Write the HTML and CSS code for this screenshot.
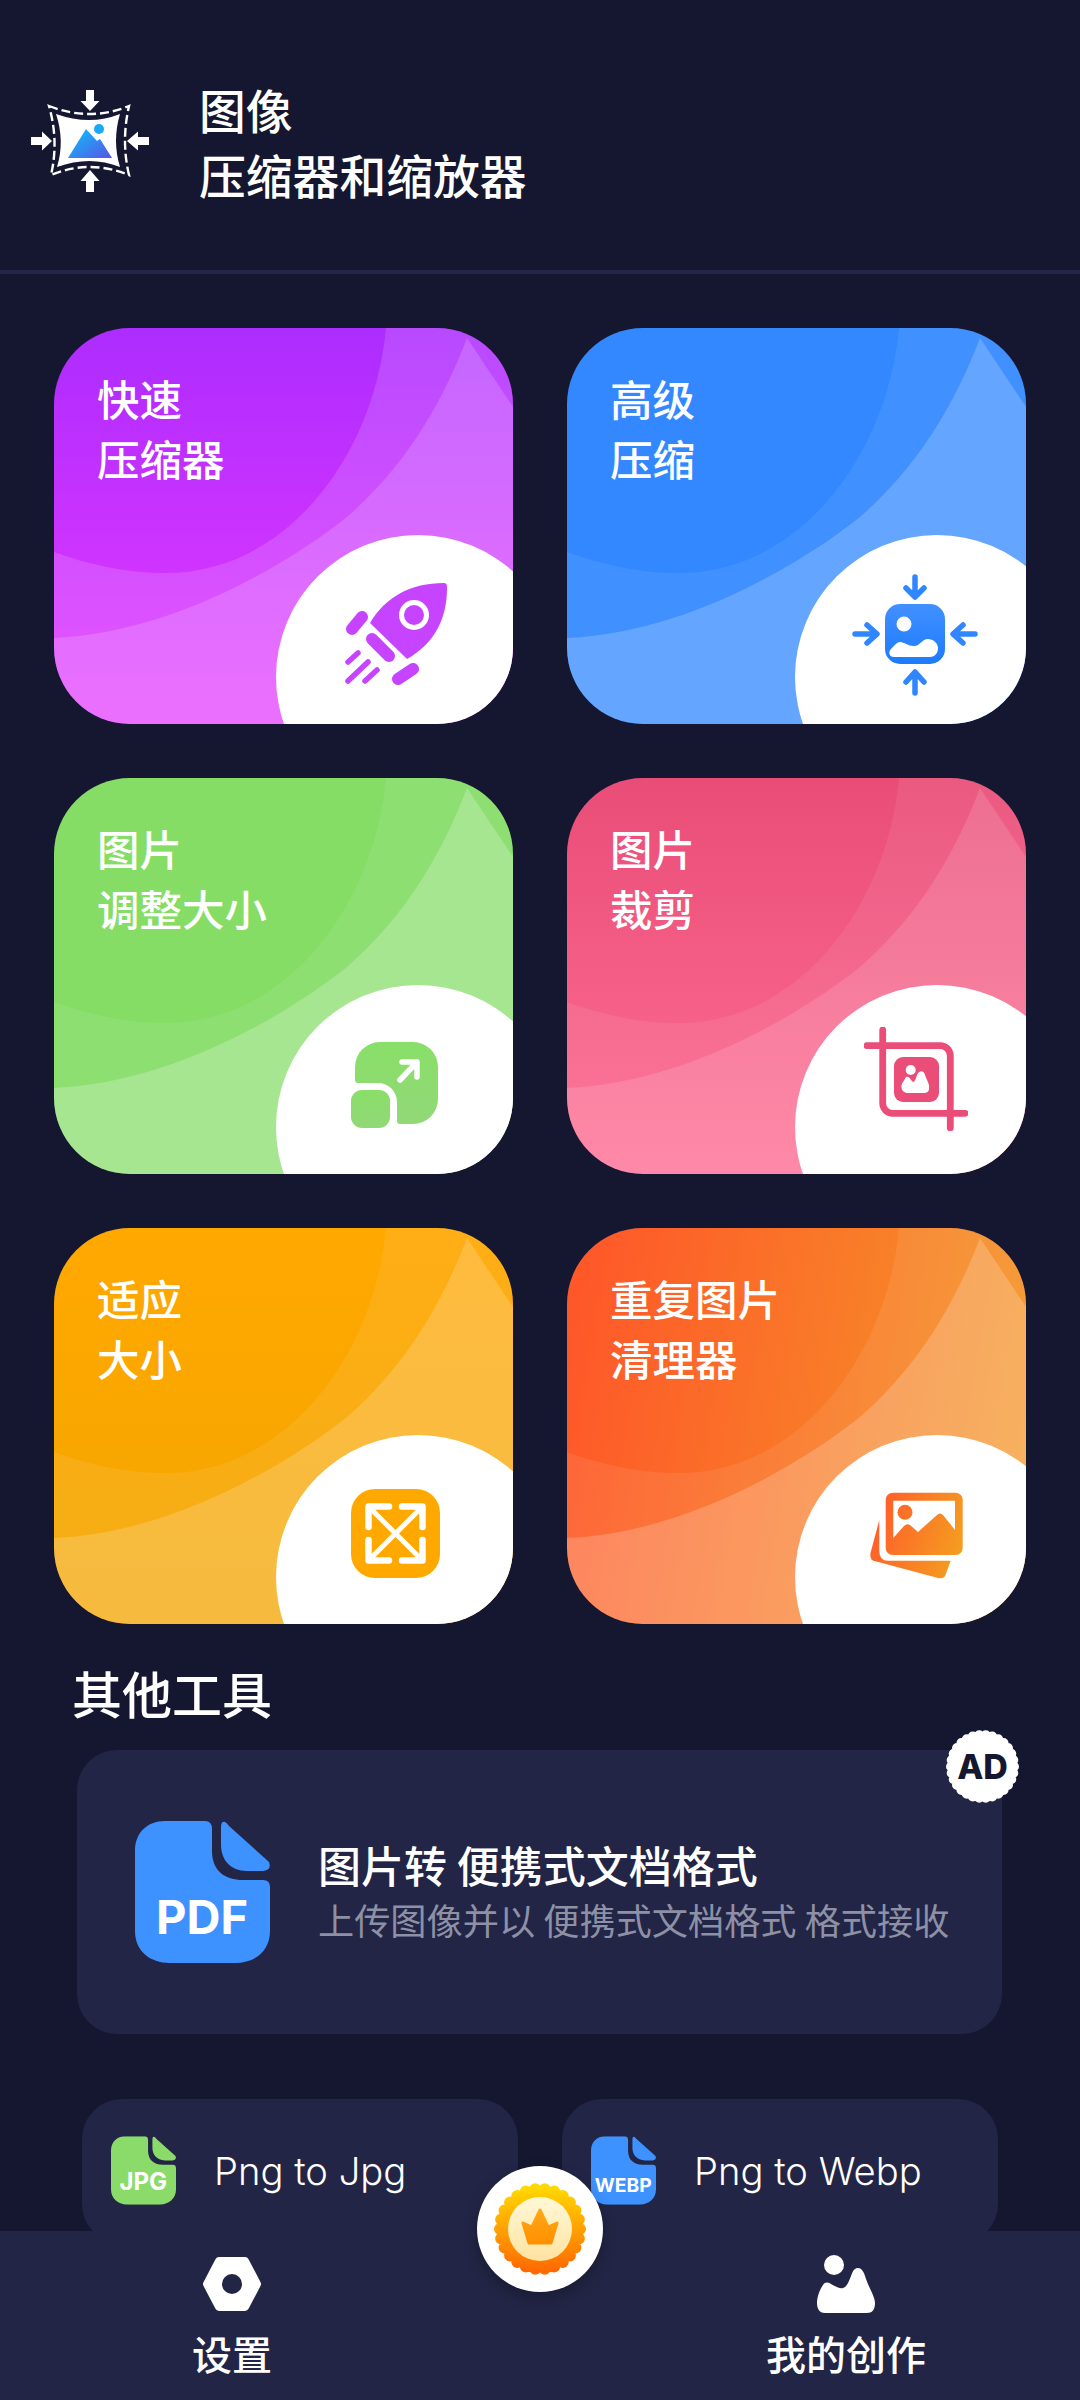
FILE: index.html
```html
<!DOCTYPE html>
<html lang="zh-CN">
<head>
<meta charset="utf-8">
<title>图像压缩器和缩放器</title>
<link rel="stylesheet" href="styles.css">
</head>
<body>
<svg class="defs" width="0" height="0" aria-hidden="true">
  <defs>
    <symbol id="waves" viewBox="0 0 459 396" preserveAspectRatio="none">
      <path class="wave-mid" d="M332 0C320 130 230 247 109 245C70 245 30 235 0 224V396H459V0Z"/>
      <path class="wave-light" d="M413 10C390 70 355 135 293 189C235 235 120 305 0 310V396H459V79Z"/>
    </symbol>
    <symbol id="doc" viewBox="0 0 135 142">
      <path d="M30 0H70Q77 0 77 8V30C77 50 90 59 108 59H128Q135 59 135 66V110C135 130 120 142 100 142H35C15 142 0 130 0 110V30C0 12 12 0 30 0Z"/>
      <path d="M86 6Q86 0 90 1Q92 2 94 5L134 41Q137 49 128 50H112C95 50 86 38 86 24Z"/>
    </symbol>
    <linearGradient id="g-logo" x1="0" y1="0" x2="1" y2="1"><stop offset="0" stop-color="#08c4ff"/><stop offset="1" stop-color="#5a54e4"/></linearGradient>
    <linearGradient id="g-blue" x1="0" y1="0" x2="0" y2="1"><stop offset="0" stop-color="#4290ff"/><stop offset="1" stop-color="#1c7bff"/></linearGradient>
    <linearGradient id="g-green" x1="0" y1="0" x2="0" y2="1"><stop offset="0" stop-color="#88df68"/><stop offset="1" stop-color="#92d878"/></linearGradient>
    <linearGradient id="g-photo" gradientUnits="userSpaceOnUse" x1="0" y1="30" x2="96" y2="60"><stop offset="0" stop-color="#ff5c2a"/><stop offset="1" stop-color="#f4a020"/></linearGradient>
    <linearGradient id="g-medal" x1="0" y1="0" x2="0" y2="1"><stop offset="0" stop-color="#ffd800"/><stop offset="1" stop-color="#ff6a00"/></linearGradient>
    <linearGradient id="g-medal-in" x1="0" y1="0" x2="0" y2="1"><stop offset="0" stop-color="#fff8d8"/><stop offset="1" stop-color="#ffe3a0"/></linearGradient>
    <linearGradient id="g-crown" x1="0" y1="0" x2="0" y2="1"><stop offset="0" stop-color="#ffa818"/><stop offset="1" stop-color="#ff9000"/></linearGradient>
  </defs>
</svg>

<header class="app-header">
  <svg class="logo" viewBox="0 0 120 104">
    <g class="logo-arrows">
      <path d="M56 1H64V12H69.5L60 22L50.5 12H56Z"/>
      <path d="M56 103H64V92H69.5L60 81L50.5 92H56Z"/>
      <path d="M1 48V56H12V61.5L22 52L12 42.5V48Z"/>
      <path d="M119 48V56H108V61.5L97 52L108 42.5V48Z"/>
    </g>
    <path class="logo-dash" d="M19 17Q60 33 99 17Q91 52 99 86Q60 70 21 86Q29 52 19 17Z"/>
    <path class="logo-face" d="M26 25Q60 37 90 25Q82 52 90 78Q60 66 27 78Q35 52 26 25Z"/>
    <path fill="url(#g-logo)" d="M38 69L56 40L67 52L70 50L82 69Z"/>
    <circle cx="69" cy="40" r="5" fill="#18a8f8"/>
  </svg>
  <h1 class="app-title">图像<br>压缩器和缩放器</h1>
</header>

<main class="tools">
  <a class="tool tool-purple">
    <svg class="waves"><use href="#waves"/></svg>
    <div class="tool-name">快速<br>压缩器</div>
    <div class="blob">
      <svg class="icon icon-rocket" viewBox="0 0 102 102">
        <path d="M99 0C102 0 102 3 102 5C102 35 90 60 62 76L25 40C40 14 66 0 99 0Z"/>
        <circle cx="69" cy="32" r="15" fill="#fff"/>
        <circle cx="69" cy="32" r="10"/>
        <g class="rocket-lines">
          <path class="thick" d="M7 46L17 34"/>
          <path class="thick" d="M53 96L68 86"/>
          <path class="thick" d="M27 56L44 73"/>
          <path d="M3 79L13 70"/>
          <path d="M3 98L23 79"/>
          <path d="M20 98L32 87"/>
        </g>
      </svg>
    </div>
  </a>

  <a class="tool tool-blue">
    <svg class="waves"><use href="#waves"/></svg>
    <div class="tool-name">高级<br>压缩</div>
    <div class="blob">
      <svg class="icon icon-compress" viewBox="0 0 126 122">
        <rect x="33" y="30" width="60" height="60" rx="15" fill="url(#g-blue)"/>
        <circle cx="52" cy="50" r="7.5" fill="#fff"/>
        <path fill="#fff" d="M42 83C37 83 36 78 39 75C43 71 45 68 48 68C52 68 56 72 62 72C68 72 70 65 76 65C81 65 86 69 86 74C86 80 82 83 78 83Z"/>
        <g class="compress-arrows">
          <path d="M63 3V22M54 14L63 23L72 14"/>
          <path d="M63 119V100M54 108L63 98L72 108"/>
          <path d="M3 60H24M15 51L25 60L15 69"/>
          <path d="M123 60H102M111 51L101 60L111 69"/>
        </g>
      </svg>
    </div>
  </a>

  <a class="tool tool-green">
    <svg class="waves"><use href="#waves"/></svg>
    <div class="tool-name">图片<br>调整大小</div>
    <div class="blob">
      <svg class="icon icon-resize" viewBox="0 0 88 87">
        <path fill="url(#g-green)" d="M4 25A25 25 0 0 1 29 0H62A25 25 0 0 1 87 25V57A25 25 0 0 1 62 82H49A3 3 0 0 1 46 79V60A19 19 0 0 0 27 41H7A3 3 0 0 1 4 38Z"/>
        <rect y="48" width="39" height="38" rx="11" fill="url(#g-green)"/>
        <path class="resize-arrow" d="M49 38L66 20M51 20H66V35"/>
      </svg>
    </div>
  </a>

  <a class="tool tool-pink">
    <svg class="waves"><use href="#waves"/></svg>
    <div class="tool-name">图片<br>裁剪</div>
    <div class="blob">
      <svg class="icon icon-crop" viewBox="0 0 104 104">
        <path class="crop-lines" d="M18.7 3V76A10 10 0 0 0 28.7 86.3H101M3 18.7H76A10 10 0 0 1 86.3 28.7V101"/>
        <rect x="30" y="30" width="45" height="45" rx="9"/>
        <circle cx="46.7" cy="43" r="5" fill="#fff"/>
        <path fill="#fff" d="M44 66C37 66 36 59 39 55L42 50C44 49 46 51 47 53L49 55C51 55 52 51 53 48C55 43 60 43 61 48C63 54 66 57 65 62C65 65 62 66 60 66Z"/>
      </svg>
    </div>
  </a>

  <a class="tool tool-amber">
    <svg class="waves"><use href="#waves"/></svg>
    <div class="tool-name">适应<br>大小</div>
    <div class="blob">
      <svg class="icon icon-expand" viewBox="0 0 89 89">
        <rect width="89" height="89" rx="24"/>
        <g class="expand-lines">
          <path class="bold" d="M17.5 38V17.5H38M71.5 38V17.5H51M17.5 51V71.5H38M71.5 51V71.5H51"/>
          <path d="M21 21L68 68M68 21L21 68"/>
        </g>
      </svg>
    </div>
  </a>

  <a class="tool tool-orange">
    <svg class="waves"><use href="#waves"/></svg>
    <div class="tool-name">重复图片<br>清理器</div>
    <div class="blob">
      <svg class="icon icon-photos" viewBox="0 0 96 90">
        <path fill="url(#g-photo)" d="M9.3 30L.5 63Q-.5 70 4.5 71L68 88Q74 89 75.5 85L80.7 70.7H18Q9 70.7 9.3 60Z"/>
        <rect x="15.7" y="2.7" width="77" height="62.3" rx="7" fill="url(#g-photo)"/>
        <path fill="#fff" d="M23.3 48V10.7H85V40L73 25Q70 22 67 25L48 42L40 35Q37 33 34 36Z"/>
        <circle cx="35" cy="22.3" r="7.5" fill="url(#g-photo)"/>
      </svg>
    </div>
  </a>
</main>

<section class="other">
  <h2 class="other-title">其他工具</h2>
  <div class="promo">
    <svg class="doc-icon doc-pdf" viewBox="0 0 135 142">
      <use href="#doc"/>
      <text class="doc-label" x="67" y="113">PDF</text>
    </svg>
    <div class="promo-text">
      <div class="promo-name">图片转 便携式文档格式</div>
      <div class="promo-desc">上传图像并以 便携式文档格式 格式接收</div>
    </div>
    <div class="ad-badge">
      <svg viewBox="0 0 72 72">
        <circle class="ad-edge" cx="36" cy="36" r="31" pathLength="30"/>
      </svg>
      <span>AD</span>
    </div>
  </div>
  <div class="convert-row">
    <div class="convert">
      <svg class="doc-icon-sm doc-green" viewBox="0 0 135 142">
        <use href="#doc"/>
        <text class="doc-label-sm" x="67" y="112">JPG</text>
      </svg>
      <span class="convert-name">Png to Jpg</span>
    </div>
    <div class="convert">
      <svg class="doc-icon-sm doc-pdf" viewBox="0 0 135 142">
        <use href="#doc"/>
        <text class="doc-label-sm webp" x="67" y="116">WEBP</text>
      </svg>
      <span class="convert-name">Png to Webp</span>
    </div>
  </div>
</section>

<nav class="bottom-nav">
  <div class="nav-item">
    <svg class="nav-icon" viewBox="0 0 58 54">
      <path class="hex" d="M4 27L16 4H42L54 27L42 50H16Z"/>
      <circle cx="29" cy="27" r="10" class="hex-hole"/>
    </svg>
    <span class="nav-label">设置</span>
  </div>
  <div class="nav-item">
    <svg class="nav-icon" viewBox="0 0 58 58">
      <circle cx="17" cy="10" r="10" fill="#fff"/>
      <path fill="#fff" d="M8 58C2 58 0 53 0 48C0 42 3 34 6 30C8 27 11 27 14 29C18 31 22 34 26 33C30 32 32 26 34 21C36 15 38 13 41 13C45 13 47 17 49 24C53 35 58 42 58 48C58 55 55 58 50 58Z"/>
    </svg>
    <span class="nav-label">我的创作</span>
  </div>
  <div class="premium">
    <svg viewBox="0 0 126 126">
      <circle class="medal-edge" cx="63" cy="63" r="40" pathLength="26"/>
      <circle cx="63" cy="63" r="42" fill="url(#g-medal)"/>
      <circle cx="63" cy="63" r="32" fill="url(#g-medal-in)"/>
      <path class="crown" d="M52 77L46 57L55 61L63 44L71 61L80 57L74 77Z"/>
    </svg>
  </div>
</nav>
</body>
</html>
```

FILE: styles.css
```css
* { box-sizing: border-box; }

html, body {
  margin: 0;
  padding: 0;
}

body {
  position: relative;
  width: 1080px;
  height: 2400px;
  overflow: hidden;
  background: #151730;
  color: #fff;
  font-family: "Noto Sans CJK SC", "Noto Sans", sans-serif;
}

.defs { position: absolute; }

/* Header */
.app-header {
  display: flex;
  align-items: center;
  gap: 49px;
  height: 274px;
  padding: 12px 0 0 30px;
  border-bottom: 4px solid #23264a;
}

.logo { width: 120px; height: 104px; flex: none; }
.logo-arrows path { fill: #fff; }
.logo-dash { fill: none; stroke: #fff; stroke-width: 2.4; stroke-dasharray: 9 4; }
.logo-face { fill: #fff; }

.app-title {
  margin: 0;
  font-size: 46.8px;
  font-weight: 500;
  line-height: 65px;
}

/* Tool cards */
.tools {
  display: grid;
  grid-template-columns: 459px 459px;
  grid-auto-rows: 396px;
  column-gap: 54px;
  row-gap: 54px;
  padding: 54px 0 0 54px;
}

.tool {
  position: relative;
  display: block;
  overflow: hidden;
  border-radius: 76px;
  --mid: 0.1;
  --light: 0.16;
}

.waves {
  position: absolute;
  inset: 0;
  width: 100%;
  height: 100%;
}
.wave-mid { fill: #fff; fill-opacity: var(--mid); }
.wave-light { fill: #fff; fill-opacity: var(--light); }

.tool-purple { background: linear-gradient(180deg, #ad2cff, #e639ff); --mid: 0.14; --light: 0.16; }
.tool-blue { background: #3388ff; --mid: 0.07; --light: 0.19; }
.tool-green { background: #85dd66; --mid: 0.08; --light: 0.22; }
.tool-pink { background: linear-gradient(180deg, #e94d77, #ff6e94); --mid: 0.07; --light: 0.13; }
.tool-amber { background: linear-gradient(180deg, #ffa800, #f4a600); --mid: 0.08; --light: 0.18; }
.tool-orange { background: linear-gradient(100deg, #ff5528, #f49a28); --mid: 0.08; --light: 0.2; }

.tool-name {
  position: relative;
  padding: 40px 0 0 43px;
  font-size: 42.5px;
  font-weight: 500;
  line-height: 60px;
}

.blob {
  position: absolute;
  left: 222px;
  top: 207px;
  width: 284px;
  height: 284px;
  border-radius: 50%;
  background: #fff;
}
.tool:nth-child(even) .blob { left: 228px; }

.icon { position: absolute; display: block; }

.icon-rocket { left: 69px; top: 48px; width: 102px; height: 102px; fill: #c644ff; }
.rocket-lines path { fill: none; stroke: #c644ff; stroke-width: 5.5; stroke-linecap: round; }
.rocket-lines .thick { stroke-width: 12; }

.icon-compress { left: 57px; top: 39px; width: 126px; height: 122px; }
.compress-arrows path {
  fill: none;
  stroke: #2f86ff;
  stroke-width: 5.5;
  stroke-linecap: round;
  stroke-linejoin: round;
}

.icon-resize { left: 75px; top: 57px; width: 88px; height: 87px; }
.resize-arrow {
  fill: none;
  stroke: #fff;
  stroke-width: 5.5;
  stroke-linecap: round;
  stroke-linejoin: round;
}

.icon-crop { left: 69px; top: 42px; width: 104px; height: 104px; fill: #e94d78; }
.crop-lines {
  fill: none;
  stroke: #e94d78;
  stroke-width: 6.8;
  stroke-linecap: round;
}

.icon-expand { left: 75px; top: 54px; width: 89px; height: 89px; fill: #ffa800; }
.expand-lines path {
  fill: none;
  stroke: #fff;
  stroke-width: 5;
  stroke-linecap: round;
  stroke-linejoin: round;
}
.expand-lines .bold { stroke-width: 6.5; }

.icon-photos { left: 75px; top: 55px; width: 96px; height: 90px; }

/* Other tools */
.other-title {
  margin: 33px 0 0 72px;
  font-size: 50px;
  font-weight: 500;
  line-height: 70px;
}

.promo {
  position: relative;
  display: flex;
  align-items: center;
  gap: 48px;
  width: 925px;
  height: 284px;
  margin: 23px 0 0 77px;
  padding: 0 0 4px 58px;
  border-radius: 40px;
  background: #222545;
}

.doc-icon { width: 135px; height: 142px; flex: none; margin-top: 4px; }
.doc-pdf { fill: #3d92ff; }
.doc-green { fill: #8bdb6b; }

.doc-label {
  fill: #fff;
  font-family: "Inter", sans-serif;
  font-size: 47px;
  font-weight: 700;
  text-anchor: middle;
}

.promo-name {
  font-size: 43px;
  font-weight: 500;
  line-height: 58px;
}

.promo-desc {
  font-size: 36.2px;
  line-height: 52px;
  color: #8e90a5;
}

.ad-badge {
  position: absolute;
  right: -17px;
  top: -20px;
  width: 73px;
  height: 73px;
  display: flex;
  align-items: center;
  justify-content: center;
}
.ad-badge svg { position: absolute; inset: 0; }
.ad-badge span {
  position: relative;
  color: #151730;
  font-family: "Inter", sans-serif;
  font-size: 34px;
  font-weight: 800;
}
.ad-edge {
  fill: #fff;
  stroke: #fff;
  stroke-width: 10;
  stroke-linecap: round;
  stroke-dasharray: 0 1;
}

.convert-row {
  display: flex;
  gap: 44px;
  margin: 65px 0 0 82px;
}

.convert {
  display: flex;
  align-items: flex-start;
  gap: 38px;
  width: 436px;
  height: 145px;
  padding: 37px 0 0 29px;
  border-radius: 40px;
  background: #222545;
}

.doc-icon-sm { width: 65px; height: 69px; flex: none; }
.doc-label-sm {
  fill: #fff;
  font-family: "Inter", sans-serif;
  font-size: 50px;
  font-weight: 700;
  text-anchor: middle;
}
.doc-label-sm.webp { font-size: 40px; }

.convert-name {
  font-family: "Inter", sans-serif;
  font-size: 38.2px;
  font-weight: 300;
  line-height: 70px;
}

/* Bottom navigation */
.bottom-nav {
  position: absolute;
  left: 0;
  right: 0;
  bottom: 0;
  display: flex;
  justify-content: space-between;
  height: 169px;
  padding: 24px 154px 0 152px;
  background: #222545;
}

.nav-item {
  display: flex;
  flex-direction: column;
  align-items: center;
  width: 160px;
}
.nav-icon { width: 58px; height: 58px; flex: none; }
.nav-label {
  margin-top: 12px;
  font-size: 40px;
  font-weight: 500;
  line-height: 56px;
  white-space: nowrap;
}

.hex { fill: #fff; stroke: #fff; stroke-width: 8; stroke-linejoin: round; }
.hex-hole { fill: #222545; }

.premium {
  position: absolute;
  left: 477px;
  top: -65px;
  width: 126px;
  height: 126px;
  border-radius: 50%;
  background: #fff;
  box-shadow: 0 6px 14px rgba(0, 0, 0, 0.25);
}
.premium svg { display: block; width: 100%; height: 100%; }
.medal-edge {
  fill: none;
  stroke: url(#g-medal);
  stroke-width: 12;
  stroke-linecap: round;
  stroke-dasharray: 0 1;
}
.crown {
  fill: url(#g-crown);
  stroke: url(#g-crown);
  stroke-width: 3;
  stroke-linejoin: round;
}
```
